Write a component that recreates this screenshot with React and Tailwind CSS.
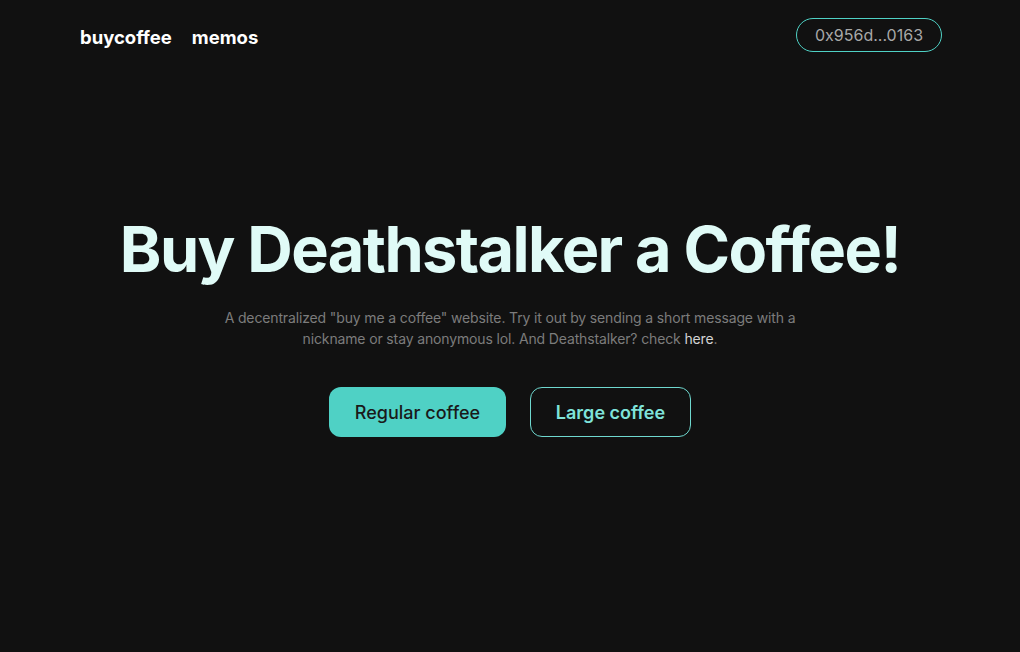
export default function App() {
  return (
    <div className="min-h-[652px] w-full bg-[#111111] flex flex-col" style={{ fontFamily: "Inter, 'Open Sans', sans-serif" }}>
      <header className="flex items-center justify-between pl-[80px] pr-[78px] pt-[18px]">
        <nav className="flex items-center gap-[20px] pt-[6px] text-[18.5px] font-bold text-white tracking-[0em]">
          <span>buycoffee</span>
          <span>memos</span>
        </nav>
        <div className="h-[34px] w-[146px] rounded-full border border-[#4fd1c5] flex items-center justify-center text-[16px] text-[#a8a8a8]">
          0x956d...0163
        </div>
      </header>
      <main className="flex flex-col items-center pt-[166px]">
        <h1 className="text-[63px] font-bold text-[#e0fbf7] tracking-[-0.025em] leading-none">
          Buy Deathstalker a Coffee!
        </h1>
        <p className="mt-[26px] w-[590px] text-center text-[14px] leading-[21px] text-[#7c7c7c] tracking-[-0.01em]">
          A decentralized "buy me a coffee" website. Try it out by sending a short message with a nickname or stay anonymous lol. And Deathstalker? check <span className="text-[#d4d4d4]">here</span>.
        </p>
        <div className="mt-[38px] flex gap-[24px]">
          <button className="h-[50px] w-[177px] rounded-[12px] bg-[#4fd1c5] text-[18px] font-medium text-[#1a1a1a]">
            Regular coffee
          </button>
          <button className="h-[50px] w-[161px] rounded-[12px] border border-[#6fd8cf] text-[18px] font-semibold text-[#7fe3da]">
            Large coffee
          </button>
        </div>
      </main>
    </div>
  );
}
